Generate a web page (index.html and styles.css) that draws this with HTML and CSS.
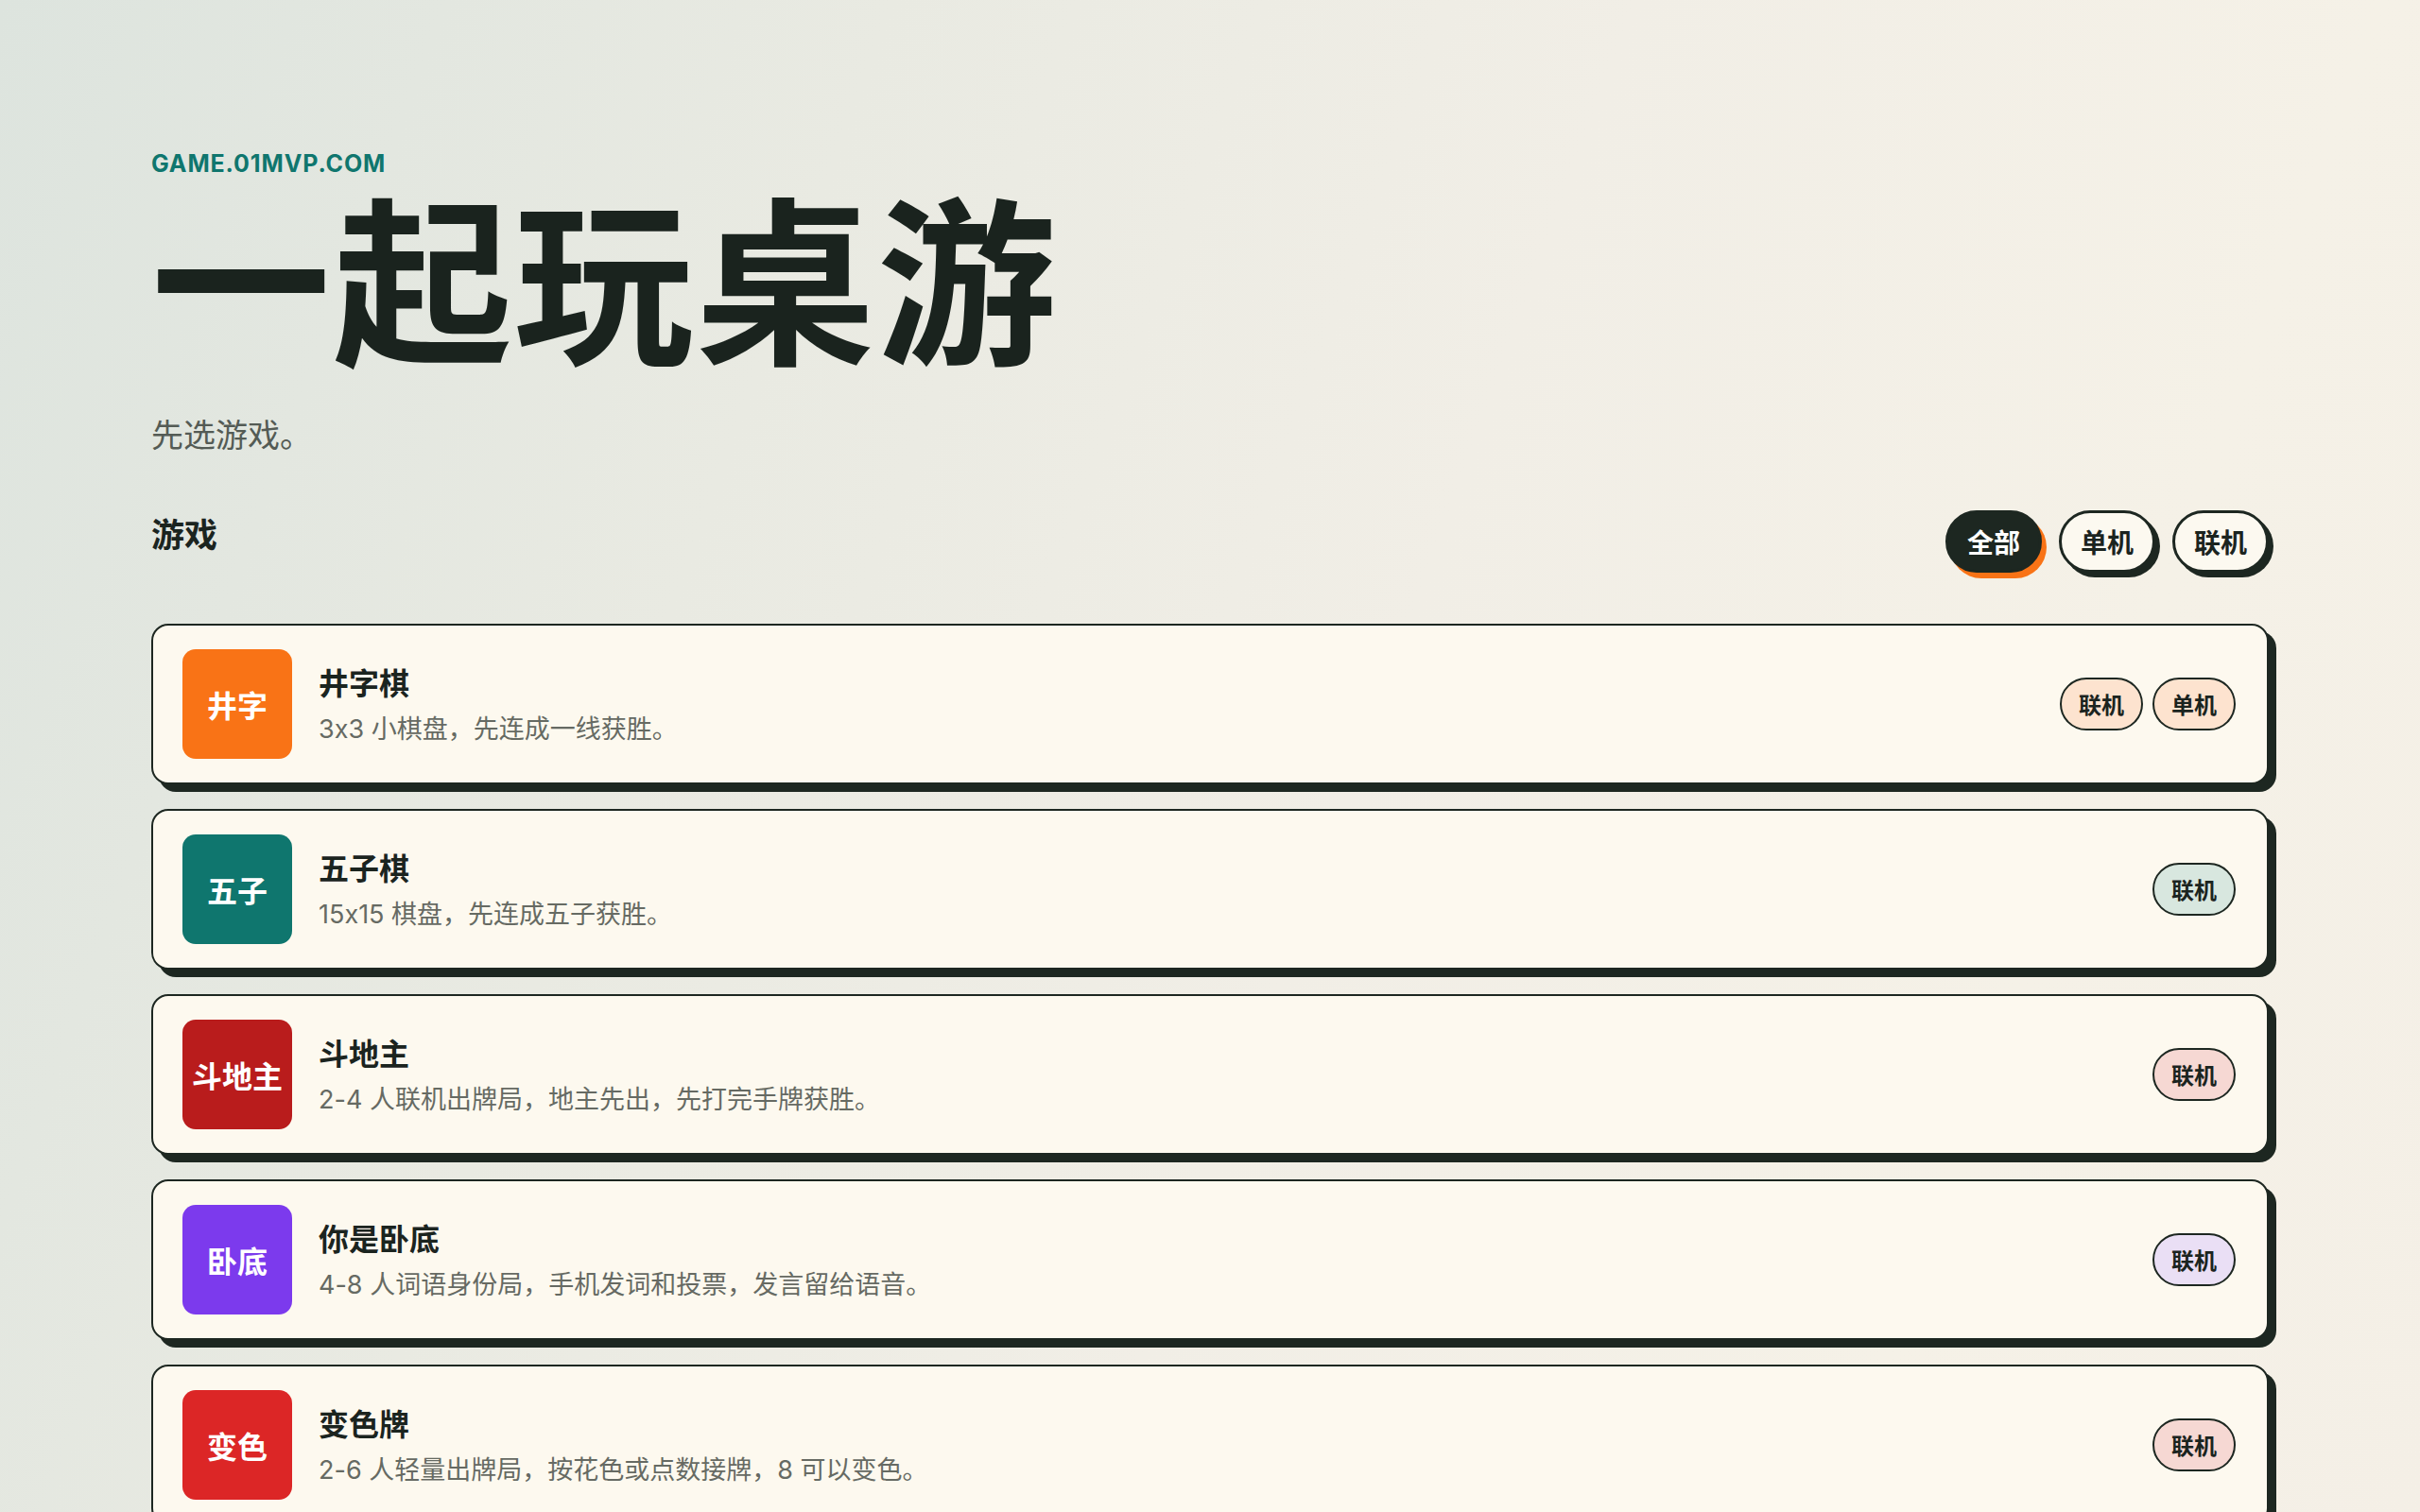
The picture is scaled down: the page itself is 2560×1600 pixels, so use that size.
FILE: index.html
```html
<!DOCTYPE html>
<html lang="zh-CN">
<head>
<meta charset="utf-8">
<title>一起玩桌游</title>
<link rel="stylesheet" href="styles.css">
</head>
<body>
<main class="page">
  <header class="hero">
    <div class="eyebrow">GAME.01MVP.COM</div>
    <h1 class="title">一起玩桌游</h1>
    <p class="subtitle">先选游戏。</p>
  </header>

  <section class="games">
    <div class="games-head">
      <h2 class="games-title">游戏</h2>
      <div class="filters">
        <button class="pill pill-active">全部</button>
        <button class="pill">单机</button>
        <button class="pill">联机</button>
      </div>
    </div>

    <ul class="game-list">
      <li class="card">
        <div class="icon icon-orange">井字</div>
        <div class="info">
          <div class="name">井字棋</div>
          <div class="desc">3x3 小棋盘，先连成一线获胜。</div>
        </div>
        <div class="tags">
          <span class="tag tag-orange">联机</span>
          <span class="tag tag-orange">单机</span>
        </div>
      </li>
      <li class="card">
        <div class="icon icon-teal">五子</div>
        <div class="info">
          <div class="name">五子棋</div>
          <div class="desc">15x15 棋盘，先连成五子获胜。</div>
        </div>
        <div class="tags">
          <span class="tag tag-teal">联机</span>
        </div>
      </li>
      <li class="card">
        <div class="icon icon-darkred">斗地主</div>
        <div class="info">
          <div class="name">斗地主</div>
          <div class="desc">2-4 人联机出牌局，地主先出，先打完手牌获胜。</div>
        </div>
        <div class="tags">
          <span class="tag tag-red">联机</span>
        </div>
      </li>
      <li class="card">
        <div class="icon icon-purple">卧底</div>
        <div class="info">
          <div class="name">你是卧底</div>
          <div class="desc">4-8 人词语身份局，手机发词和投票，发言留给语音。</div>
        </div>
        <div class="tags">
          <span class="tag tag-purple">联机</span>
        </div>
      </li>
      <li class="card">
        <div class="icon icon-red">变色</div>
        <div class="info">
          <div class="name">变色牌</div>
          <div class="desc">2-6 人轻量出牌局，按花色或点数接牌，8 可以变色。</div>
        </div>
        <div class="tags">
          <span class="tag tag-red">联机</span>
        </div>
      </li>
    </ul>
  </section>
</main>
</body>
</html>
```

FILE: styles.css
```css
* {
  box-sizing: border-box;
}

html, body {
  margin: 0;
  padding: 0;
}

body {
  min-height: 1600px;
  background: linear-gradient(110deg, #dde4de 0%, #e9eae2 30%, #f1eee6 55%, #f5f1e7 80%, #f4efe6 100%);
  font-family: "Inter", "Noto Sans CJK SC", sans-serif;
  font-feature-settings: "calt" 0;
  color: #1b241f;
}

.page {
  padding: 158px 160px 0;
}

.hero {
  display: flex;
  flex-direction: column;
}

.eyebrow {
  font-family: "Inter", sans-serif;
  font-size: 25px;
  line-height: 30px;
  font-weight: 700;
  letter-spacing: 0.035em;
  color: #0f766e;
}

.title {
  margin: 6px 0 0;
  font-family: "Noto Sans CJK SC", sans-serif;
  font-size: 190px;
  line-height: 190px;
  font-weight: 700;
  letter-spacing: 0.01em;
  color: #1a231e;
}

.subtitle {
  margin: 51px 0 0;
  font-family: "Noto Sans CJK SC", sans-serif;
  font-size: 34px;
  line-height: 48px;
  color: #545b55;
}

.games-head {
  margin-top: 57px;
  display: flex;
  justify-content: space-between;
  align-items: flex-start;
}

.games-title {
  margin: 0;
  font-family: "Noto Sans CJK SC", sans-serif;
  font-size: 35px;
  line-height: 48px;
  font-weight: 700;
  color: #1b241f;
}

.filters {
  display: flex;
  gap: 18px;
}

.pill {
  font-family: "Noto Sans CJK SC", sans-serif;
  font-size: 28px;
  line-height: 36px;
  font-weight: 700;
  padding: 12px 20px;
  border: 3px solid #1d2721;
  border-radius: 999px;
  background: #fcf9f0;
  color: #1b241f;
  box-shadow: 5px 5px 0 #1d2721;
  cursor: pointer;
}

.pill-active {
  background: #1d2721;
  color: #ffffff;
  box-shadow: 5px 6px 0 #f97316;
}

.game-list {
  list-style: none;
  margin: 54px 0 0;
  padding: 0;
  display: flex;
  flex-direction: column;
  gap: 26px;
}

.card {
  display: flex;
  align-items: center;
  gap: 28px;
  height: 170px;
  padding: 25px 33px 25px 31px;
  background: #fdf9ef;
  border: 2px solid #1d2721;
  border-radius: 18px;
  box-shadow: 8px 8px 0 #1d2721;
}

.icon {
  flex: none;
  width: 116px;
  height: 116px;
  border-radius: 14px;
  display: flex;
  align-items: center;
  justify-content: center;
  font-family: "Noto Sans CJK SC", sans-serif;
  font-size: 32px;
  font-weight: 700;
  color: #ffffff;
  white-space: nowrap;
}

.icon-orange { background: #f97316; }
.icon-teal { background: #0f766e; }
.icon-darkred { background: #b91c1c; }
.icon-purple { background: #7c3aed; }
.icon-red { background: #dc2626; }

.info {
  flex: 1;
  display: flex;
  flex-direction: column;
  gap: 13px;
  min-width: 0;
}

.name {
  font-family: "Noto Sans CJK SC", sans-serif;
  font-size: 32px;
  line-height: 40px;
  font-weight: 700;
  color: #1b241f;
}

.desc {
  font-family: "Inter", "Noto Sans CJK SC", sans-serif;
  font-size: 27px;
  line-height: 36px;
  color: #666a63;
}

.tags {
  display: flex;
  gap: 10px;
  flex: none;
}

.tag {
  font-family: "Noto Sans CJK SC", sans-serif;
  font-size: 24px;
  line-height: 32px;
  font-weight: 700;
  padding: 10px 18px;
  border: 2px solid #1d2721;
  border-radius: 999px;
  color: #1b241f;
}

.tag-orange { background: #fde3cf; }
.tag-teal { background: #d8e7df; }
.tag-red { background: #f6d8d3; }
.tag-purple { background: #eadff5; }
```
